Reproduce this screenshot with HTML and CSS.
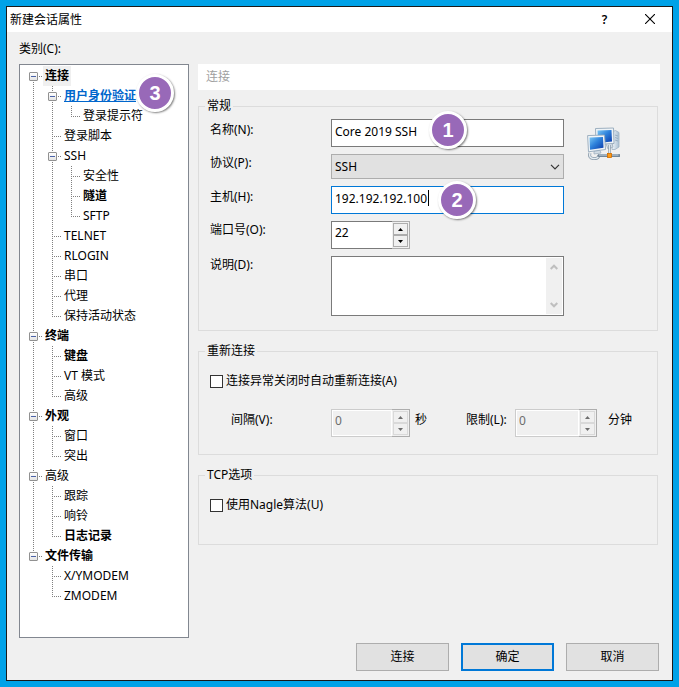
FILE: index.html
```html
<!DOCTYPE html>
<html lang="zh-CN">
<head>
<meta charset="utf-8">
<meta name="viewport" content="width=device-width, initial-scale=1">
<title>新建会话属性</title>
<link rel="stylesheet" href="styles.css">
</head>
<body>
<main class="window">
  <header class="titlebar">
    <h1 class="title">新建会话属性</h1>
    <button class="title-btn" type="button" aria-label="帮助">?</button>
    <button class="title-btn" type="button" aria-label="关闭">
      <svg width="10" height="10" viewBox="0 0 10 10"><path d="M0 0L10 10M10 0L0 10" stroke="#000" stroke-width="1.1"/></svg>
    </button>
  </header>

  <form class="dialog">
    <p class="caption">类别(C):</p>
    <div class="columns">
      <nav class="tree-box" aria-label="类别">
        <ul class="tree">
          <li><div class="node"><button class="toggle" type="button" aria-label="折叠"></button><span class="text strong selected">连接</span></div>
            <ul>
              <li><div class="node"><button class="toggle" type="button" aria-label="折叠"></button><a class="text strong link" href="#auth">用户身份验证</a><span class="badge badge-tree">3</span></div>
                <ul>
                  <li><div class="node"><span class="text">登录提示符</span></div></li>
                </ul>
              </li>
              <li><div class="node"><span class="text">登录脚本</span></div></li>
              <li><div class="node"><button class="toggle" type="button" aria-label="折叠"></button><span class="text">SSH</span></div>
                <ul>
                  <li><div class="node"><span class="text">安全性</span></div></li>
                  <li><div class="node"><span class="text strong">隧道</span></div></li>
                  <li><div class="node"><span class="text">SFTP</span></div></li>
                </ul>
              </li>
              <li><div class="node"><span class="text">TELNET</span></div></li>
              <li><div class="node"><span class="text">RLOGIN</span></div></li>
              <li><div class="node"><span class="text">串口</span></div></li>
              <li><div class="node"><span class="text">代理</span></div></li>
              <li><div class="node"><span class="text">保持活动状态</span></div></li>
            </ul>
          </li>
          <li><div class="node"><button class="toggle" type="button" aria-label="折叠"></button><span class="text strong">终端</span></div>
            <ul>
              <li><div class="node"><span class="text strong">键盘</span></div></li>
              <li><div class="node"><span class="text">VT 模式</span></div></li>
              <li><div class="node"><span class="text">高级</span></div></li>
            </ul>
          </li>
          <li><div class="node"><button class="toggle" type="button" aria-label="折叠"></button><span class="text strong">外观</span></div>
            <ul>
              <li><div class="node"><span class="text">窗口</span></div></li>
              <li><div class="node"><span class="text">突出</span></div></li>
            </ul>
          </li>
          <li><div class="node"><button class="toggle" type="button" aria-label="折叠"></button><span class="text">高级</span></div>
            <ul>
              <li><div class="node"><span class="text">跟踪</span></div></li>
              <li><div class="node"><span class="text">响铃</span></div></li>
              <li><div class="node"><span class="text strong">日志记录</span></div></li>
            </ul>
          </li>
          <li><div class="node"><button class="toggle" type="button" aria-label="折叠"></button><span class="text strong">文件传输</span></div>
            <ul>
              <li><div class="node"><span class="text">X/YMODEM</span></div></li>
              <li><div class="node"><span class="text">ZMODEM</span></div></li>
            </ul>
          </li>
        </ul>
      </nav>

      <div class="panel">
        <h2 class="panel-title">连接</h2>

        <fieldset class="group general">
          <legend>常规</legend>
          <div class="general-body">
            <div class="fields">
              <label class="label label-text" for="name">名称(N):</label>
              <div class="control">
                <input class="input" id="name" type="text" value="Core 2019 SSH">
                <span class="badge badge-name">1</span>
              </div>
              <label class="label" for="protocol">协议(P):</label>
              <div class="control">
                <select class="select" id="protocol"><option>SSH</option></select>
                <svg class="chevron" width="10" height="6" viewBox="0 0 10 6"><path d="M1 .8L5 4.8L9 .8" fill="none" stroke="#333" stroke-width="1.2"/></svg>
              </div>
              <label class="label label-text" for="host">主机(H):</label>
              <div class="control">
                <input class="input active" id="host" type="text" value="192.192.192.100">
                <span class="badge badge-host">2</span>
              </div>
              <label class="label" for="port">端口号(O):</label>
              <div class="spinner">
                <input class="spin-input" id="port" type="text" inputmode="numeric" value="22">
                <span class="spin-buttons">
                  <button class="spin" type="button" aria-label="增加"><svg width="5" height="3" viewBox="0 0 5 3"><path d="M0 3L2.5 0L5 3z"/></svg></button>
                  <button class="spin" type="button" aria-label="减少"><svg width="5" height="3" viewBox="0 0 5 3"><path d="M0 0L2.5 3L5 0z"/></svg></button>
                </span>
              </div>
              <label class="label" for="note">说明(D):</label>
              <div class="control">
                <textarea class="textarea" id="note"></textarea>
                <span class="scrollbar">
                  <svg width="8" height="6" viewBox="0 0 8 6"><path d="M.7 5L4 1.7L7.3 5" fill="none" stroke="#bfbfbf" stroke-width="2"/></svg>
                  <svg width="8" height="6" viewBox="0 0 8 6"><path d="M.7 1L4 4.3L7.3 1" fill="none" stroke="#bfbfbf" stroke-width="2"/></svg>
                </span>
              </div>
            </div>
            <svg class="computers" width="33" height="33" viewBox="0 0 33 33" aria-hidden="true">
              <defs>
                <linearGradient id="screen" x1="0" y1="0" x2="1" y2="1">
                  <stop offset="0" stop-color="#7cc8f4"/><stop offset=".45" stop-color="#2f83dc"/><stop offset="1" stop-color="#0a39a8"/>
                </linearGradient>
                <linearGradient id="case" x1="0" y1="0" x2="1" y2="0">
                  <stop offset="0" stop-color="#f2f6fa"/><stop offset="1" stop-color="#a9bfd2"/>
                </linearGradient>
              </defs>
              <path d="M26 4.5L28.500 3.500L32 5.500V20L28 22.500H25z" fill="url(#case)" stroke="#9fb2c4" stroke-width=".8"/>
              <path d="M28 8L31 9M28 10.500L31 11.500M28 13L31 14" stroke="#8fa5ba" stroke-width=".8"/>
              <path d="M8.500 1.500L26.500 1L27 16.500L9 18z" fill="#eef3f7" stroke="#94a8ba" stroke-width=".9"/>
              <path d="M10.500 3.500L24.500 3L25 14.500L11 16z" fill="url(#screen)"/>
              <path d="M19 17L25 16.500L26 20L21 22z" fill="#d3dde6" stroke="#9aaaba" stroke-width=".7"/>
              <path d="M22.500 18V28" stroke="#899aaa" stroke-width="2.400"/>
              <path d="M22.500 18V28" stroke="#dfe7ed"/>
              <path d="M7 24L13 23.500L14 26L7 27z" fill="#d3dde6" stroke="#9aaaba" stroke-width=".7"/>
              <path d="M.6 8.600L17.500 8L18.500 22.500L1.500 24.800z" fill="#f1f5f8" stroke="#94a8ba" stroke-width=".9"/>
              <path d="M2.500 10.500L16 10L16.500 20.800L3 22.700z" fill="url(#screen)"/>
              <path d="M3 26Q1.500 31 6 31.500Q12 32 11.500 28.300" fill="none" stroke="#8798a8" stroke-width="3"/>
              <path d="M3 26Q1.500 31 6 31.500Q12 32 11.500 28.300" fill="none" stroke="#e6edf2" stroke-width="1.500"/>
              <path d="M12 28.500H32" stroke="#728699" stroke-width="3" stroke-linecap="round"/>
              <path d="M12 28H31.500" stroke="#bccbd7" stroke-width="1.200"/>
              <rect x="20.500" y="26.500" width="4" height="4" fill="#ff9a12" stroke="#d06c00" stroke-width=".8"/>
            </svg>
          </div>
        </fieldset>

        <fieldset class="group reconnect">
          <legend>重新连接</legend>
          <label class="check"><input type="checkbox">连接异常关闭时自动重新连接(A)</label>
          <div class="limits">
            <label class="label label-text interval" for="interval">间隔(V):</label>
            <div class="spinner disabled">
              <input class="spin-input" id="interval" type="text" value="0" disabled>
              <span class="spin-buttons">
                <button class="spin" type="button" aria-label="增加" disabled><svg width="5" height="3" viewBox="0 0 5 3"><path d="M0 3L2.500 0L5 3z"/></svg></button>
                <button class="spin" type="button" aria-label="减少" disabled><svg width="5" height="3" viewBox="0 0 5 3"><path d="M0 0L2.500 3L5 0z"/></svg></button>
              </span>
            </div>
            <span class="label label-text seconds">秒</span>
            <label class="label label-text limit" for="limit">限制(L):</label>
            <div class="spinner disabled">
              <input class="spin-input" id="limit" type="text" value="0" disabled>
              <span class="spin-buttons">
                <button class="spin" type="button" aria-label="增加" disabled><svg width="5" height="3" viewBox="0 0 5 3"><path d="M0 3L2.500 0L5 3z"/></svg></button>
                <button class="spin" type="button" aria-label="减少" disabled><svg width="5" height="3" viewBox="0 0 5 3"><path d="M0 0L2.500 3L5 0z"/></svg></button>
              </span>
            </div>
            <span class="label label-text minutes">分钟</span>
          </div>
        </fieldset>

        <fieldset class="group tcp">
          <legend>TCP选项</legend>
          <label class="check"><input type="checkbox">使用Nagle算法(U)</label>
        </fieldset>
      </div>
    </div>

    <footer class="actions">
      <button class="btn" type="button">连接</button>
      <button class="btn primary" type="button">确定</button>
      <button class="btn" type="button">取消</button>
    </footer>
  </form>
</main>
</body>
</html>
```

FILE: styles.css
```css
* { box-sizing: border-box; }

body {
  margin: 0;
  min-height: 100vh;
  padding: 6px;
  display: flex;
  background: #00a2e8;
  color: #000;
  font: 12px/16px "Noto Sans", "Noto Sans CJK SC", sans-serif;
}

input, select, textarea, button { font: inherit; color: inherit; margin: 0; border-radius: 0; }
h1, h2, p, ul { margin: 0; padding: 0; font: inherit; }

.window {
  flex: 1;
  display: flex;
  flex-direction: column;
  border: 1px solid #1a1a1a;
  background: #f0f0f0;
}

/* Title bar */
.titlebar {
  display: flex;
  align-items: center;
  height: 25px;
  padding-left: 3px;
  background: #fff;
}
.title { flex: 1; }
.title-btn {
  width: 45px;
  height: 25px;
  padding: 0;
  border: 0;
  background: none;
  font-weight: 600;
}

/* Dialog body */
.dialog {
  flex: 1;
  display: flex;
  flex-direction: column;
  padding: 0 12px 9px;
}
.caption { padding: 9px 0 7px; }
.columns { flex: 1; display: flex; gap: 9px; }

/* Category tree */
.tree-box {
  width: 170px;
  padding: 1px 0 1px 9px;
  border: 1px solid #828790;
  background: #fff;
}
.tree-box ul { list-style: none; }
.tree ul { margin-left: 19px; }
.tree li {
  background: repeating-linear-gradient(#808080 0 1px, transparent 1px 2px) 4px 0 / 1px 100% no-repeat;
}
.tree > li:first-child { background-position: 4px 10px; }
.tree li:last-child { background-size: 1px 10px; }
.node {
  position: relative;
  display: flex;
  align-items: center;
  height: 20px;
  background: repeating-linear-gradient(90deg, #808080 0 1px, transparent 1px 2px) 4px 10px / 9px 1px no-repeat;
}
.toggle {
  width: 9px;
  height: 9px;
  padding: 0;
  border: 1px solid #919191;
  border-radius: 1px;
  background: linear-gradient(#4b63a7, #4b63a7) center / 5px 1px no-repeat, linear-gradient(#fff, #e4e4e4);
}
.text { margin-left: 14px; padding: 0 2px; line-height: 20px; white-space: nowrap; }
.toggle + .text { margin-left: 5px; }
.strong { font-weight: 700; }
.selected { background: #f0f0f0; }
.link { color: #0066cc; }

/* Numbered markers */
.badge {
  position: absolute;
  z-index: 1;
  width: 38px;
  height: 38px;
  border: 3px solid #fff;
  border-radius: 50%;
  background: #9869b8;
  box-shadow: 1px 1px 2px rgba(0, 0, 0, .5);
  color: #fff;
  font: bold 20px/32px "Liberation Sans", sans-serif;
  text-align: center;
}
.badge-tree { left: 88px; top: -12px; }
.badge-name { left: 98px; top: -8px; }
.badge-host { left: 107px; top: -5px; }

/* Settings panel */
.panel { flex: 1; min-width: 0; }
.panel-title {
  padding: 5px 8px;
  margin-bottom: 8px;
  background: #fff;
  color: #a0a0a0;
}
.group {
  min-width: 0;
  margin: 0 2px 12px 0;
  padding: 5px 11px 14px;
  border: 1px solid #dcdcdc;
}
.group legend { margin-left: -5px; padding: 0 2px; }
.reconnect { padding-top: 14px; padding-bottom: 17px; }
.tcp { padding-top: 14px; padding-bottom: 31px; }

.general-body { display: flex; align-items: flex-start; gap: 23px; padding-right: 26px; }
.fields {
  flex: 1;
  display: grid;
  grid-template-columns: 121px minmax(0, 1fr);
  align-items: start;
  row-gap: 7px;
}
.computers { margin-top: 8px; }
.label { padding-top: 1px; white-space: nowrap; }
.label-text { padding-top: 3px; }
.control { position: relative; display: flex; }

.input, .select, .textarea { width: 100%; border: 1px solid #7a7a7a; background: #fff; outline: 0; }
.input { height: 28px; padding: 0 4px 4px 3px; }
.input.active {
  border-color: #0078d7;
  background: linear-gradient(#000, #000) 96px 3px / 1px 16px no-repeat #fff;
}
.select {
  height: 25px;
  padding: 0 20px 0 3px;
  appearance: none;
  border-color: #adadad;
  background: #e1e1e1;
}
.chevron { position: absolute; right: 4px; top: 10px; pointer-events: none; }
.textarea { height: 60px; padding: 2px 20px 2px 3px; resize: none; overflow: hidden; }
.scrollbar {
  position: absolute;
  inset: 2px 2px 2px auto;
  width: 16px;
  display: flex;
  flex-direction: column;
  justify-content: space-between;
  align-items: center;
  padding: 6px 0;
  background: #f0f0f0;
}

.spinner { display: flex; width: 79px; height: 28px; }
.spin-input {
  flex: 1;
  min-width: 0;
  padding: 0 3px 4px;
  border: 1px solid #7a7a7a;
  border-right: 0;
  background: #fff;
}
.spin-buttons {
  display: flex;
  flex-direction: column;
  width: 18px;
  padding: 1px;
  border: 1px solid #adadad;
  border-left: 0;
}
.spin {
  flex: 1;
  display: flex;
  align-items: center;
  justify-content: center;
  padding: 0;
  border: 1px solid #adadad;
  background: #f0f0f0;
}
.disabled .spin-input { border-color: #ccc; background: #f0f0f0; color: #6d6d6d; box-shadow: inset 0 0 0 1px #fff; }
.disabled .spin { border-color: #d9d9d9; }
.disabled .spin path { fill: #6d6d6d; }

.check { display: flex; align-items: center; gap: 3px; }
.check input {
  width: 13px;
  height: 13px;
  appearance: none;
  border: 1px solid #333;
  background: #fff;
}
.limits { display: flex; margin-top: 20px; }
.interval { width: 121px; padding-left: 21px; }
.seconds { width: 56px; padding-left: 5px; }
.limit { width: 49px; }
.limits .limit + .spinner { width: 82px; }
.minutes { padding-left: 11px; }

/* Action buttons */
.actions { display: flex; justify-content: flex-end; gap: 12px; padding: 5px 1px 0 0; }
.btn {
  width: 93px;
  height: 28px;
  padding: 0;
  border: 1px solid #adadad;
  background: #e1e1e1;
}
.primary { border: 2px solid #0078d7; }
```
